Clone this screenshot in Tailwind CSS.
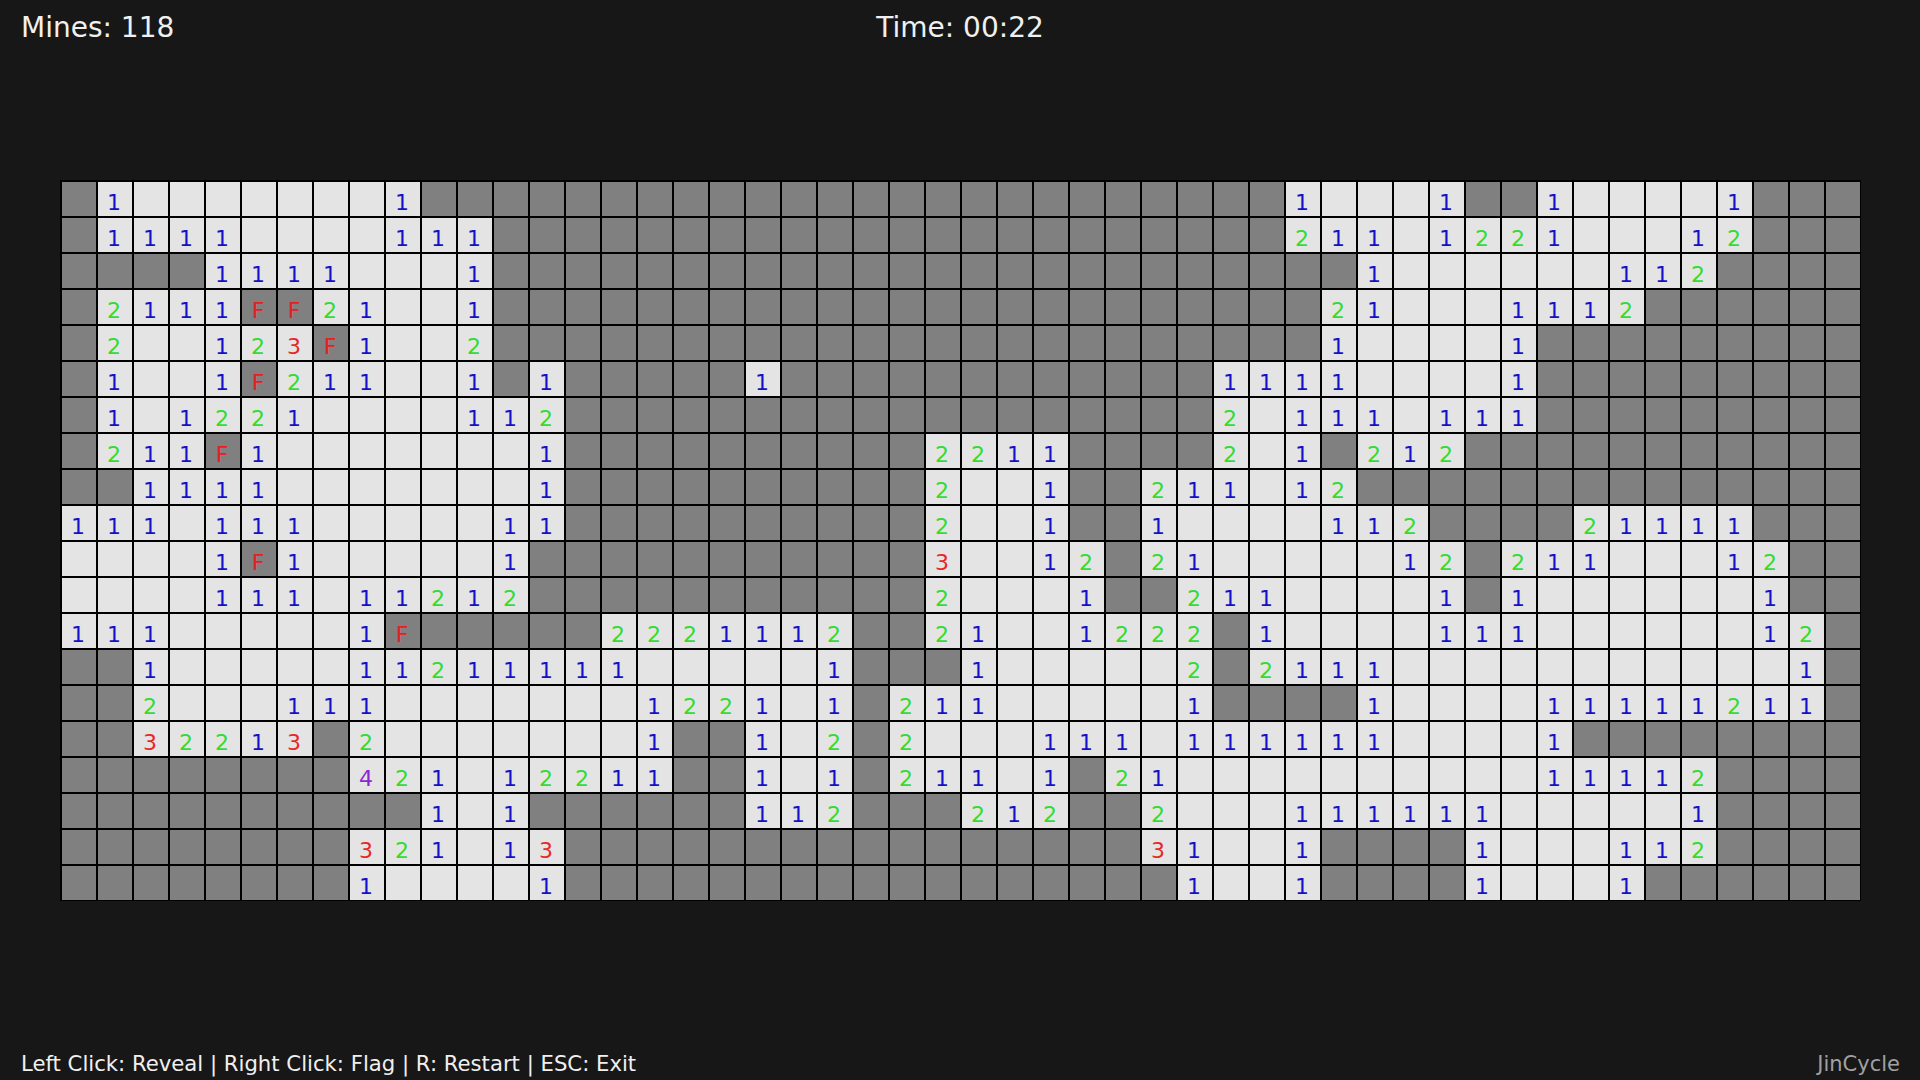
<!DOCTYPE html>
<html lang="en">
<head>
  <meta charset="UTF-8" />
  <title>Minesweeper</title>
  <script src="https://cdn.jsdelivr.net/npm/@tailwindcss/browser@4"></script>
</head>
<body class="bg-[#171717] text-[#f0f0f0] font-['DejaVu_Sans',sans-serif] h-screen flex flex-col overflow-hidden">
  <header class="h-[180px] shrink-0 grid grid-cols-3 text-[28px] leading-[34px] pt-[11px] px-[21px]">
    <div>Mines: 118</div>
    <div class="text-center">Time: 00:22</div>
    <div></div>
  </header>

  <main class="ml-[60px] w-[1801px] h-[721px] shrink-0 bg-black border-r border-b border-black">
    <div id="board" class="grid grid-cols-[repeat(50,36px)] grid-rows-[repeat(20,36px)]"></div>
  </main>

  <footer class="flex-1 flex items-end justify-between pl-[21px] pr-[20px] pb-[2px]">
    <div class="text-[21.2px] leading-[28px]">Left Click: Reveal | Right Click: Flag | R: Restart | ESC: Exit</div>
    <div class="text-[21px] leading-[28px] text-[#a0a0a0]">JinCycle</div>
  </footer>

  <script>
    const H = (n) => "#".repeat(n);
    const rows = [
      "#1.......1" + H(24) + "1...1##1....1###",
      "#1111....111" + H(22) + "211.1221...12###",
      "####1111...1" + H(22) + "##1......112####",
      "#2111FF21..1" + H(22) + "#21...1112######",
      "#2..123F1..2" + H(22) + "#1....1#########",
      "#1..1F211..1#1" + H(5) + "1" + H(12) + "11" + "11....1#########",
      "#1.1221....112" + H(18) + "2." + "111.111#########",
      "#211F1.......1" + H(10) + "2211####2." + "1#212###########",
      "##1111.......1" + H(10) + "2..1##211." + "12##############",
      "111.111.....11" + H(10) + "2..1##1..." + ".112####21111###",
      "....1F1.....1" + H(11) + "3..12#21.." + "...12#211...12##",
      "....111.11212" + H(11) + "2...1##211" + "....1#1......1##",
      "111.....1F#####22" + "21112##21..1222#1" + "....111......12#",
      "##1.....11211111." + "....1###1.....2#2" + "111...........1#",
      "##2...111.......1" + "221.1#211.....1##" + "##1....11111211#",
      "##32213#2.......1" + "##1.2#2...111.111" + "111....1########",
      "########421.12211" + "##1.1#211.1#21..." + ".......11112####",
      "##########1.1####" + "##112###212##2..." + "111111.....1####",
      "########321.13###" + H(13) + "31.." + "1####1...112####",
      "########1....1###" + H(14) + "1.." + "1####1...1######",
    ];

    const textColor = {
      "1": "text-[#1410c8]",
      "2": "text-[#32dc32]",
      "3": "text-[#e62828]",
      "4": "text-[#8c28d2]",
      "F": "text-[#e62020]",
    };

    const board = document.getElementById("board");
    rows.forEach((row) => {
      for (const ch of row) {
        const cell = document.createElement("div");
        const hidden = ch === "#" || ch === "F";
        cell.className =
          "flex items-center justify-center pt-[7px] pr-[2px] border-l-2 border-t-2 border-black text-[22px] leading-none " +
          (hidden ? "bg-[#808080] " : "bg-[#e4e4e4] ") +
          (textColor[ch] || "");
        if (ch !== "#" && ch !== ".") cell.textContent = ch;
        board.appendChild(cell);
      }
    });
  </script>
</body>
</html>
